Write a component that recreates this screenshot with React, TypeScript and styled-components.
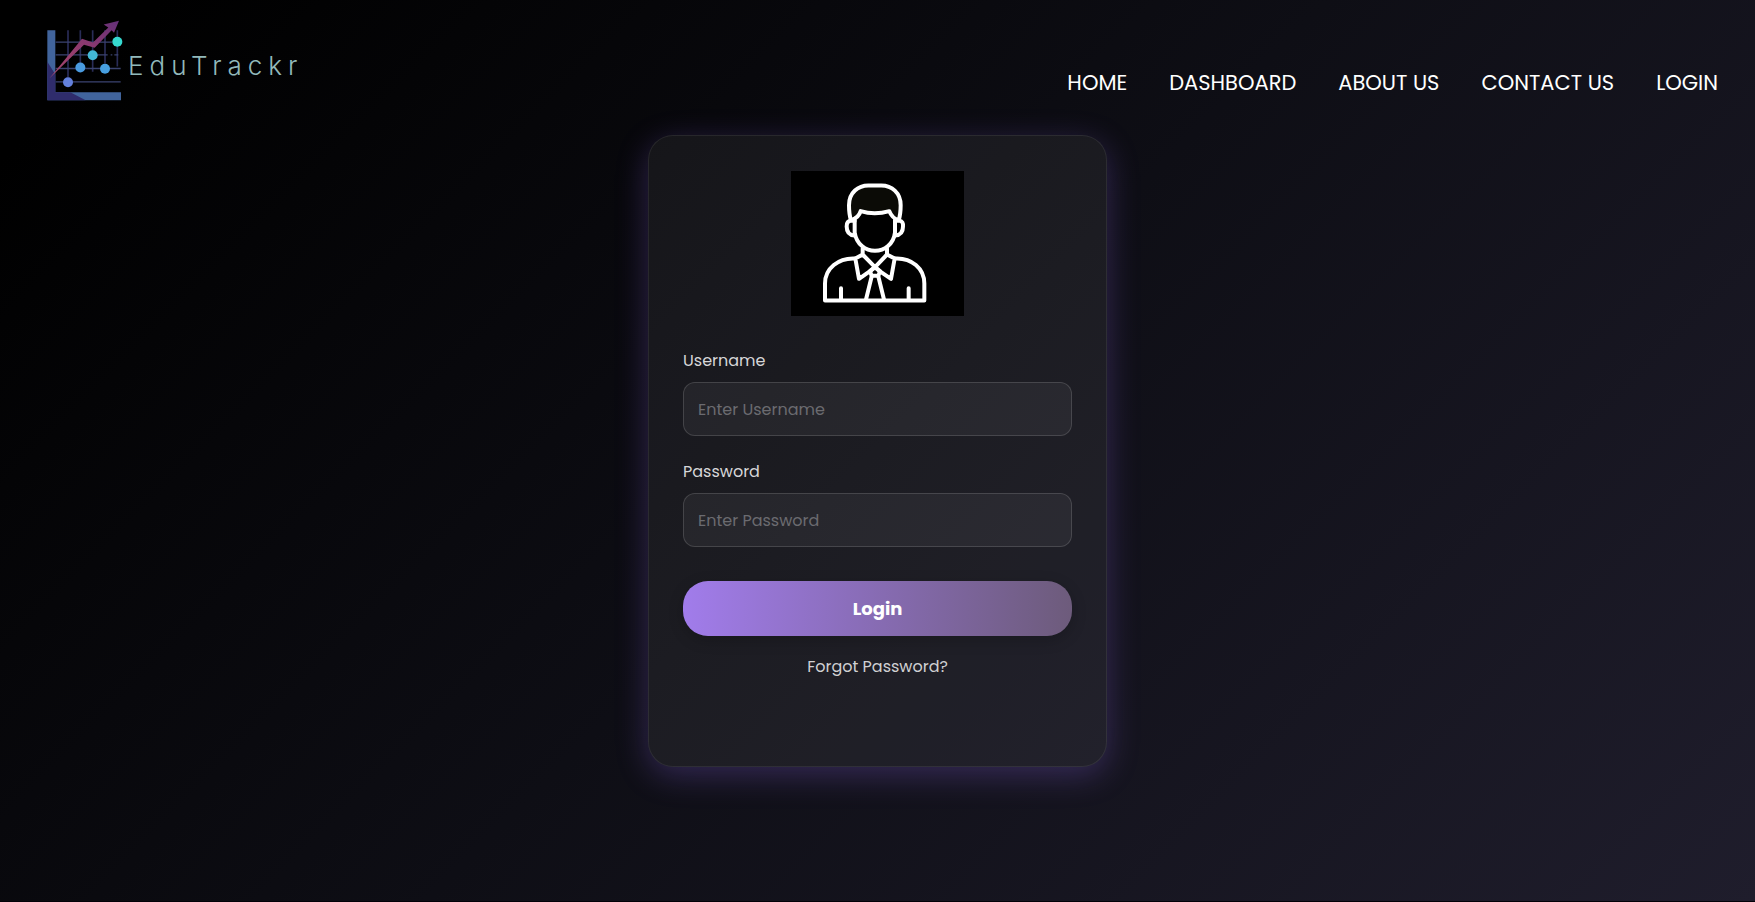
import React from "react";
import styled, { createGlobalStyle } from "styled-components";

const GlobalStyle = createGlobalStyle`
  *, *::before, *::after { box-sizing: border-box; }
  body {
    margin: 0;
    background: #020108;
    font-family: Poppins, Inter, "Open Sans", sans-serif;
  }
`;

const Page = styled.div`
  min-height: calc(100vh - 1px);
  padding-bottom: 40px;
  background: linear-gradient(135deg, #000 6%, #0e0e15 50%, #1f1d2c 100%);
`;

const Header = styled.header`
  display: flex;
  justify-content: space-between;
  padding: 20px 37px 0 47px;
`;

const Brand = styled.a`
  display: flex;
  align-items: center;
  gap: 5px;
  color: #92b9bb;
  text-decoration: none;
`;

const BrandMark = styled.svg`
  width: 76px;
  height: 81px;
`;

const BrandName = styled.span`
  padding-top: 10px;
  font-family: Inter, sans-serif;
  font-size: 26px;
  line-height: 32px;
  font-weight: 300;
  letter-spacing: 6px;
`;

const Nav = styled.nav`
  display: flex;
  flex-wrap: wrap;
  gap: 42px;
  padding-top: 48px;
`;

const NavLink = styled.a`
  color: #fff;
  font-size: 21px;
  line-height: 30px;
  text-decoration: none;
  text-transform: uppercase;
`;

const Main = styled.main`
  display: flex;
  justify-content: center;
  padding: 34px 20px 0;
`;

const Card = styled.form`
  display: flex;
  flex-direction: column;
  width: 100%;
  max-width: 459px;
  padding: 35px 34px 87px;
  border: 1px solid rgba(255, 255, 255, 0.08);
  border-radius: 25px;
  background: rgba(255, 255, 255, 0.06);
  box-shadow: 0 8px 32px rgba(124, 92, 210, 0.33);
`;

const Avatar = styled.svg`
  align-self: center;
  width: 173px;
  height: 145px;
  margin-bottom: 33px;
  background: #000;
`;

const Field = styled.div`
  display: flex;
  flex-direction: column;
  gap: 9px;
  margin-bottom: 24px;
`;

const Label = styled.label`
  color: #d6d6d8;
  font-size: 16px;
  line-height: 24px;
`;

const TextInput = styled.input`
  width: 100%;
  height: 54px;
  padding: 0 14px;
  border: 1px solid rgba(255, 255, 255, 0.14);
  border-radius: 12px;
  outline: none;
  background: rgba(255, 255, 255, 0.05);
  color: #fff;
  font: inherit;
  font-size: 16px;

  &::placeholder {
    color: #6b6b70;
    opacity: 1;
  }
`;

const SubmitButton = styled.button`
  height: 55px;
  margin-top: 10px;
  border: 0;
  border-radius: 25px;
  background: linear-gradient(90deg, #a17ceb, #6d5b7b);
  box-shadow: 0 4px 15px rgba(0, 0, 0, 0.2);
  color: #fff;
  font: inherit;
  font-size: 18px;
  font-weight: 700;
  cursor: pointer;
`;

const ForgotLink = styled.a`
  align-self: center;
  margin-top: 19px;
  color: #d0d0d3;
  font-size: 16px;
  line-height: 24px;
  text-decoration: none;
`;

const links = ["Home", "Dashboard", "About Us", "Contact Us", "Login"];

const Logo = () => (
  <BrandMark viewBox="50 45 228 242" aria-hidden="true">
    <defs>
      <linearGradient id="arrow" x1="0" y1="1" x2="1" y2="0">
        <stop offset="0" stopColor="#a8496c" />
        <stop offset="0.5" stopColor="#8f3a6e" />
        <stop offset="1" stopColor="#643078" />
      </linearGradient>
    </defs>
    <g stroke="#292c57" strokeWidth="5">
      <path d="M113 75V217M150 75V175M187 75V200M224 75V175M261 75V184" />
    </g>
    <g stroke="#3b4370" strokeWidth="4">
      <path d="M76 111H246M76 149H232M241 149H246M252 149H264M76 190H271M76 230H271" />
    </g>
    <path d="M51 75H75V261H272V285H51Z" fill="#41649c" />
    <path d="M51 170L75 208V261H120L166 285H51Z" fill="#2f2c6c" />
    <path d="M57 220L155 101L188 112L234 67L220 58L266 47L251 83L244 75L193 128L161 119Z" fill="url(#arrow)" />
    <circle cx="113" cy="231" r="15" fill="#6380dc" />
    <circle cx="150" cy="187" r="15" fill="#4a9be0" />
    <circle cx="187" cy="150" r="15" fill="#42b8d6" />
    <circle cx="224" cy="191" r="15" fill="#479fe0" />
    <circle cx="261" cy="110" r="15" fill="#36d9d0" />
  </BrandMark>
);

const Portrait = () => (
  <Avatar viewBox="63 48 519 434" role="img" aria-label="User">
    <g fill="none" stroke="#fff" strokeWidth="12" strokeLinejoin="round" strokeLinecap="round">
      <path d="M243 195C238 180 237 165 237 150C237 112 265 91 295 91H334C365 91 392 112 392 150C392 165 391 180 386 195C372 191 364 184 358 168C330 176 298 176 272 168C267 184 259 191 243 195Z" fill="#0b0b06" />
      <path d="M254 196V232C259 267 287 287 315 287C343 287 371 267 375 232V196" />
      <path d="M254 197H243C234 197 230 204 230 214C230 230 238 240 254 241" />
      <path d="M375 197H388C397 197 400 204 399 214C399 230 391 240 375 241" />
      <path d="M278 280V298L256 310L267 371L300 348L315 336L351 298V280M278 298L315 336L329 348L363 371L374 310L351 298" />
      <path d="M300 348L305 362H325L330 348L315 336Z" />
      <path d="M305 364L288 433M325 364L342 433" />
      <path d="M256 310C205 307 165 340 165 385V436H463V385C463 340 425 307 374 310" />
      <path d="M213 399V434M416 399V434" />
    </g>
  </Avatar>
);

export default function App() {
  return (
    <>
      <GlobalStyle />
      <Page>
        <Header>
          <Brand href="#home">
            <Logo />
            <BrandName>EduTrackr</BrandName>
          </Brand>
          <Nav aria-label="Main">
            {links.map((name) => (
              <NavLink key={name} href={`#${name.toLowerCase().replace(" ", "-")}`}>
                {name}
              </NavLink>
            ))}
          </Nav>
        </Header>
        <Main>
          <Card onSubmit={(event: React.FormEvent) => event.preventDefault()}>
            <Portrait />
            <Field>
              <Label htmlFor="username">Username</Label>
              <TextInput id="username" type="text" placeholder="Enter Username" />
            </Field>
            <Field>
              <Label htmlFor="password">Password</Label>
              <TextInput id="password" type="password" placeholder="Enter Password" />
            </Field>
            <SubmitButton type="submit">Login</SubmitButton>
            <ForgotLink href="#forgot-password">Forgot Password?</ForgotLink>
          </Card>
        </Main>
      </Page>
    </>
  );
}
